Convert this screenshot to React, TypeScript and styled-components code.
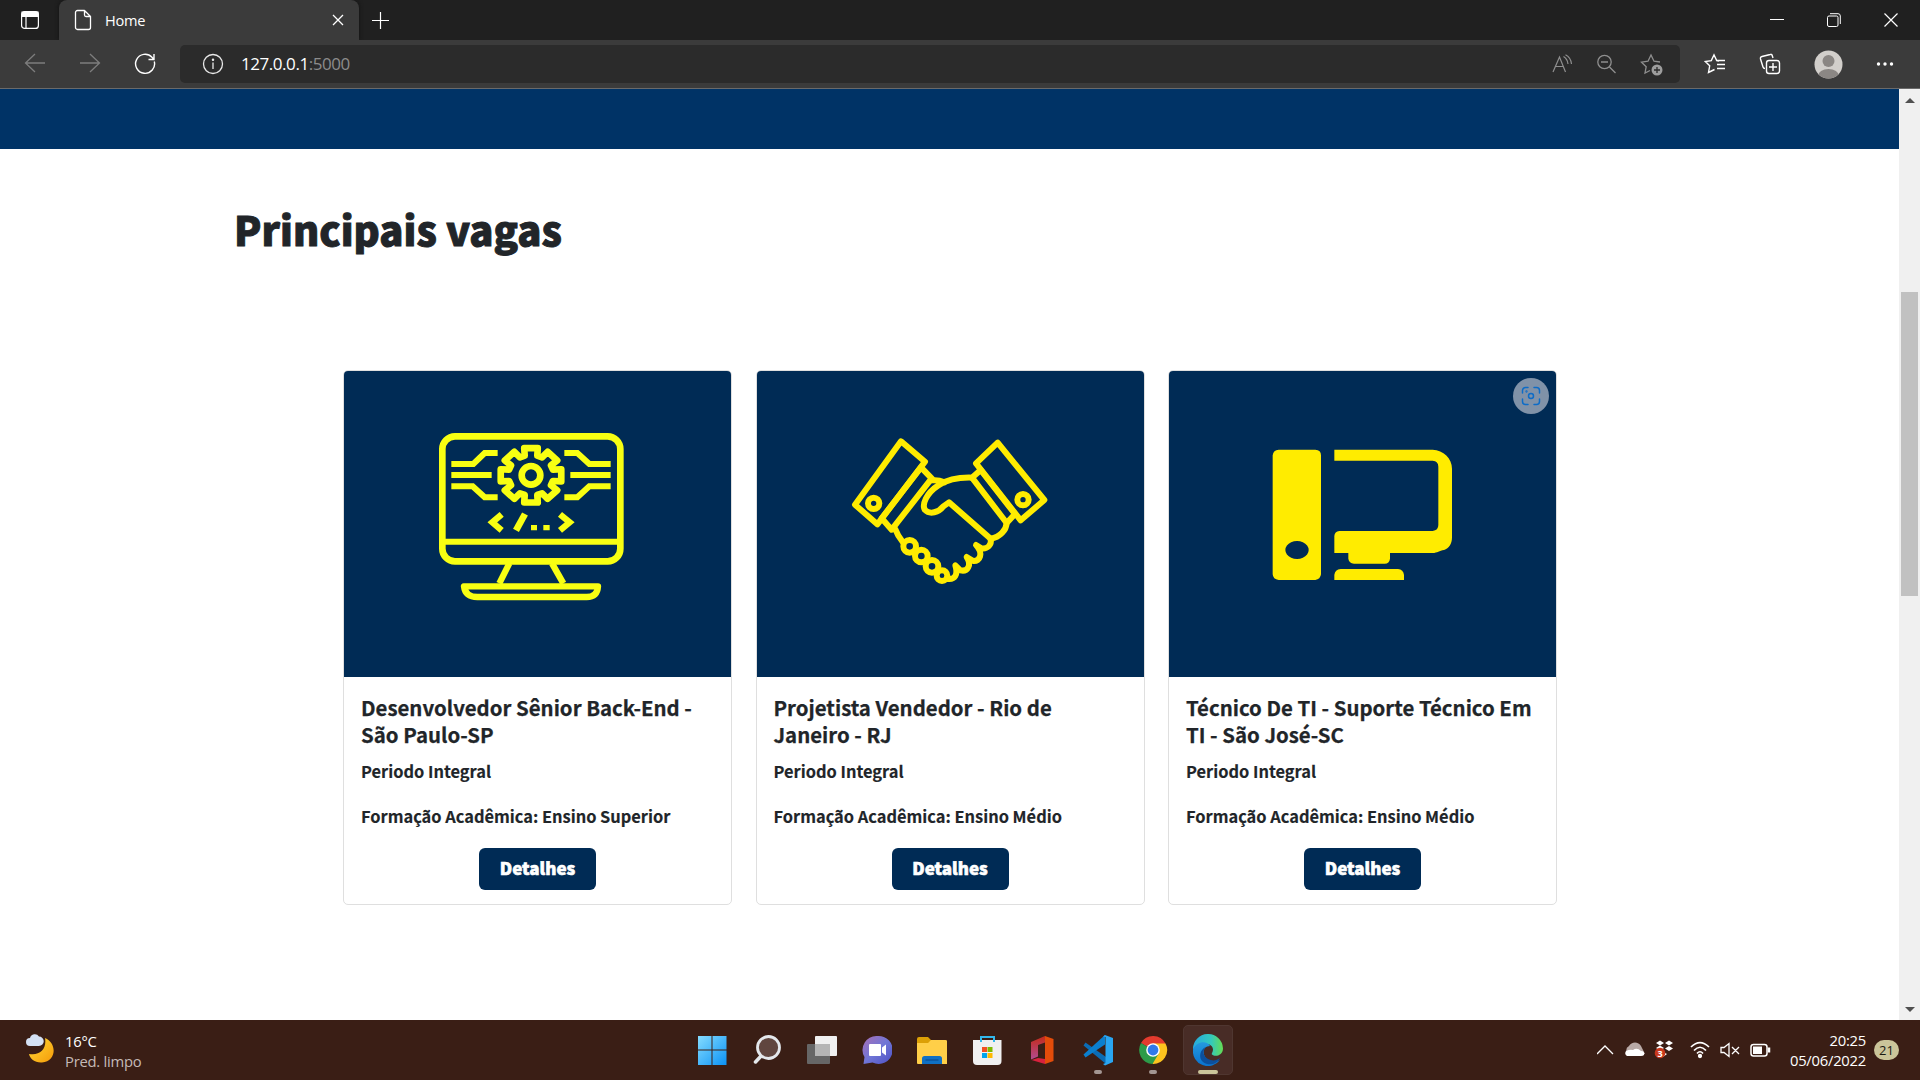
import React from "react";
import styled, { createGlobalStyle } from "styled-components";

const Global = createGlobalStyle`
  * { box-sizing: border-box; }
  html, body { margin: 0; padding: 0; overflow: hidden; }
  body { font-family: "Open Sans", "Noto Sans", sans-serif; }
  h1, h2, p { margin: 0; }
  svg { display: block; flex: none; }
`;

const Screen = styled.div`
  width: 1920px;
  height: 1080px;
  display: flex;
  flex-direction: column;
  background: #fff;
`;

/* ---------- browser ---------- */
const TabStrip = styled.div`
  height: 40px;
  background: #202020;
  display: flex;
  align-items: stretch;
`;
const TabMenu = styled.div`
  width: 59px;
  display: flex;
  align-items: center;
  padding-left: 20px;
`;
const Tab = styled.div`
  width: 300px;
  background: #3b3b3b;
  border-radius: 8px 8px 0 0;
  display: flex;
  align-items: center;
  padding: 0 15px 0 15px;
  color: #fff;
  box-shadow: 0 0 4px #111;
`;
const TabTitle = styled.span`
  flex: 1;
  padding-left: 13px;
  font-size: 14.6px;
  letter-spacing: -0.25px;
  line-height: 20px;
`;
const NewTab = styled.div`
  display: flex;
  align-items: center;
  padding-left: 12px;
  flex: 1;
`;
const WindowButtons = styled.div`
  display: flex;
  align-items: center;
  gap: 43px;
  padding-right: 22px;
`;
const Toolbar = styled.div`
  height: 49px;
  background: #3b3b3b;
  border-bottom: 1px solid #6a6a6a;
  display: flex;
  align-items: center;
  padding: 0 26px 0 24px;
`;
const NavGroup = styled.div`
  display: flex;
  gap: 33px;
  width: 156px;
`;
const AddressBar = styled.div`
  width: 1500px;
  height: 38px;
  border-radius: 5px;
  background: #2b2b2b;
  display: flex;
  align-items: center;
  padding: 0 16px 0 22px;
`;
const Address = styled.span<{ $muted?: boolean }>`
  color: ${(p) => (p.$muted ? "#8c8c8c" : "#fff")};
  font-size: 17px;
  letter-spacing: -0.45px;
  line-height: 24px;
`;
const AddressText = styled.div`
  flex: 1;
  padding-left: 17px;
  display: flex;
`;
const AddressIcons = styled.div`
  display: flex;
  align-items: center;
  gap: 23px;
`;
const ToolIcons = styled.div`
  flex: 1;
  display: flex;
  align-items: center;
  justify-content: space-between;
  padding-left: 24px;
`;

/* ---------- page ---------- */
const Viewport = styled.div`
  height: 931px;
  display: flex;
`;
const Page = styled.main`
  width: 1899px;
  font-family: "Noto Sans CJK JP", "Noto Sans", sans-serif;
  color: #212529;
`;
const Banner = styled.div`
  height: 60px;
  background: #003366;
`;
const Heading = styled.h1`
  padding: 46px 0 0 234px;
  height: 221px;
  font-size: 40px;
  line-height: 68px;
  font-weight: 900;
  -webkit-text-stroke: 0.9px #212529;
  white-space: nowrap;
`;
const Cards = styled.div`
  display: flex;
  gap: 23.5px;
  padding-left: 343px;
`;
const Card = styled.article`
  width: 389px;
  height: 535px;
  border: 1px solid #dfdfdf;
  border-radius: 5px;
  overflow: hidden;
  display: flex;
  flex-direction: column;
`;
const Picture = styled.div<{ $left: number; $top: number }>`
  position: relative;
  height: 306px;
  width: 387px;
  background: #002b55;
  padding: ${(p) => p.$top}px 0 0 ${(p) => p.$left}px;
`;
const VisualSearch = styled.div`
  position: absolute;
  top: 7px;
  right: 7px;
  width: 36px;
  height: 36px;
  border-radius: 50%;
  background: #8092a8;
  display: flex;
  align-items: center;
  justify-content: center;
`;
const Body = styled.div`
  padding: 17px 17px 0;
  display: flex;
  flex-direction: column;
`;
const JobTitle = styled.h2`
  font-size: 20.4px;
  line-height: 27px;
  height: 54px;
  font-weight: 700;
  -webkit-text-stroke: 0.25px #212529;
  white-space: nowrap;
`;
const JobLine = styled.p<{ $gap: number }>`
  margin-top: ${(p) => p.$gap}px;
  font-size: 16.4px;
  line-height: 27px;
  font-weight: 700;
  -webkit-text-stroke: 0.15px #212529;
  white-space: nowrap;
`;
const Details = styled.button`
  align-self: center;
  margin-top: 18px;
  width: 117px;
  height: 42px;
  border: 0;
  padding: 0 0 2px;
  border-radius: 6px;
  background: #002b55;
  color: #fff;
  font: 900 17px/40px "Noto Sans CJK JP", sans-serif;
  -webkit-text-stroke: 0.6px #fff;
`;
const Scrollbar = styled.div`
  width: 21px;
  background: #f0f0f0;
  display: flex;
  flex-direction: column;
  align-items: center;
  padding: 9px 0 8px;
`;
const Arrow = styled.div<{ $down?: boolean }>`
  width: 0;
  height: 0;
  border-left: 5px solid transparent;
  border-right: 5px solid transparent;
  ${(p) => (p.$down ? "border-top: 5px solid #505050; margin-top: auto;" : "border-bottom: 5px solid #505050;")}
`;
const Thumb = styled.div`
  margin-top: 189px;
  width: 17px;
  height: 304px;
  background: #c1c1c1;
`;

/* ---------- taskbar ---------- */
const Taskbar = styled.footer`
  height: 60px;
  background: #3a1e15;
  display: flex;
  color: #fff;
`;
const Weather = styled.div`
  width: 687px;
  display: flex;
  padding: 10px 0 0 25px;
  gap: 11px;
`;
const WeatherText = styled.div<{ $dim?: boolean }>`
  position: relative;
  top: 1px;
  font-size: 14.8px;
  line-height: 20px;
  letter-spacing: -0.25px;
  color: ${(p) => (p.$dim ? "#c5bab7" : "#fff")};
`;
const Apps = styled.div`
  display: flex;
  align-items: center;
  gap: 5.08px;
  flex: 1;
`;
const TaskbarApp = styled.div<{ $active?: boolean }>`
  width: 50px;
  height: 50px;
  border-radius: 5px;
  border: 1px solid ${(p) => (p.$active ? "#4f3630" : "transparent")};
  background: ${(p) => (p.$active ? "#482c26" : "transparent")};
  display: flex;
  flex-direction: column;
  align-items: center;
  padding-top: 8px;
`;
const Running = styled.span<{ $active?: boolean }>`
  margin-top: 4px;
  width: ${(p) => (p.$active ? 20 : 8)}px;
  height: 4px;
  border-radius: 2px;
  background: ${(p) => (p.$active ? "#cbc59a" : "#a39692")};
`;
const Tray = styled.div`
  width: 323px;
  display: flex;
  align-items: center;
`;
const TrayIcons = styled.div`
  display: flex;
  width: 175px;
`;
const Clock = styled.div`
  width: 94px;
  text-align: right;
  font-size: 14.8px;
  line-height: 20px;
  letter-spacing: -0.25px;
`;
const Badge = styled.div`
  margin-left: 8px;
  width: 25px;
  height: 20px;
  border-radius: 10px;
  background: #cbc59a;
  color: #1c1a12;
  font-size: 13px;
  line-height: 20px;
  text-align: center;
`;

const Y1 = "#f8ff12";
const Y2 = "#ffec00";

const gear = (() => {
  const pts: string[] = [];
  for (let i = 0; i < 8; i++) {
    const a = (i * Math.PI) / 4 - Math.PI / 2;
    const at = (r: number, d: number) => `${(333 + r * 1.07 * Math.cos(a + d)).toFixed(1)},${(196 + r * 0.96 * Math.sin(a + d)).toFixed(1)}`;
    pts.push(at(64, -0.28), at(87, -0.22), at(87, 0.22), at(64, 0.28));
  }
  return pts.join(" ");
})();

const DevArt = () => (
  <svg width="220" height="210" viewBox="0 0 660 630" fill="none" stroke={Y1} strokeWidth="18">
    <rect x="67" y="79" width="534" height="375" rx="38" strokeWidth="20" />
    <path d="M68 395H600" />
    <path d="M268 460L238 520M396 460L430 520" strokeWidth="19" />
    <path d="M132 529H534Q532 561 500 561H172Q136 561 132 529Z" strokeWidth="19" strokeLinejoin="round" />
    <path d="M94 162H160L194 129H233M94 195H215M94 229H158L194 262H233" />
    <path d="M572 162H508L472 129H433M572 195H451M572 229H508L472 262H433" />
    <polygon points={gear} strokeLinejoin="round" strokeWidth="20" />
    <circle cx="333" cy="196" r="28" strokeWidth="20" />
    <path d="M245 313L217 337L245 361M420 313L449 337L420 361" strokeWidth="19" />
    <path d="M315 312L288 361" strokeWidth="20" />
    <path d="M333 345H351V361H333ZM370 345H389V361H370Z" fill={Y1} stroke="none" />
  </svg>
);

const HandsArt = () => (
  <svg width="240" height="200" viewBox="0 0 720 600" fill="none" stroke={Y2} strokeWidth="18" strokeLinejoin="round" strokeLinecap="round">
    <path d="M213 94L285 155L142 343L75 284Z" />
    <path d="M503 98L438 160L572 331L643 270Z" />
    <circle cx="131" cy="280" r="17" />
    <circle cx="579" cy="269" r="17" />
    <path d="M273 172L155 325L185 359L305 205L273 172M305 205L185 359" />
    <path d="M452 180L555 312L530 339L426 203L452 180" />
    <path d="M307 211Q325 209 343 217" />
    <path d="M426 203Q365 201 325 226C288 250 275 285 285 300C300 315 326 307 340 289L357 277L482 386C510 382 529 360 530 339" />
    <path d="M196 358Q203 378 219 397" />
    <circle cx="239" cy="409" r="19" />
    <circle cx="274" cy="438" r="19" />
    <circle cx="306" cy="469" r="19" />
    <circle cx="336" cy="497" r="16" />
    <path d="M482 386C486 405 472 418 454 415L438 405C461 430 450 455 430 453L410 441C426 465 413 486 391 481L376 466C385 495 374 509 354 507" />
  </svg>
);

const ComputerArt = () => (
  <svg width="190" height="150" viewBox="60 240 570 450" fill={Y2}>
    <path fillRule="evenodd" d="M86 269H196Q213 270 213 286V643Q211 658 196 660H86Q69 658 68 643V286Q70 270 86 269ZM141 543a35 27 0 1 0 .1 0Z" />
    <path d="M253 269H548C580 270 606 295 606 326V532C606 552 597 565 582 570C568 572 562 579 548 579H420V596Q418 611 404 611H312Q297 609 295 596V579H253V528Q254 514 268 513H548Q565 511 565 495V320Q565 303 548 302H253Z" />
    <path d="M253 660V645Q255 628 272 627H444Q460 629 462 645V660Z" />
  </svg>
);

const jobs = [
  { title: ["Desenvolvedor Sênior Back-End -", "São Paulo-SP"], degree: "Ensino Superior", art: <DevArt />, left: 76, top: 39 },
  { title: ["Projetista Vendedor - Rio de", "Janeiro - RJ"], degree: "Ensino Médio", art: <HandsArt />, left: 73.5, top: 39 },
  { title: ["Técnico De TI - Suporte Técnico Em", "TI - São José-SC"], degree: "Ensino Médio", art: <ComputerArt />, left: 101, top: 69, search: true },
];

const Chrome = () => (
  <>
    <TabStrip>
      <TabMenu>
        <svg width="20" height="20" viewBox="0 0 20 20" fill="none" stroke="#fff" strokeWidth="1.2">
          <rect x="1.6" y="1.6" width="16.8" height="16.8" rx="3" />
          <path d="M2 2h16v4.500H2Z" fill="#fff" />
          <path d="M6 6v12" />
        </svg>
      </TabMenu>
      <Tab>
        <svg width="18" height="22" viewBox="0 0 18 22" fill="none" stroke="#fff" strokeWidth="1.3" strokeLinejoin="round">
          <path d="M3.500 1.500h7L16.500 7.500V18.500a2 2 0 0 1-2 2h-11a2 2 0 0 1-2-2v-15a2 2 0 0 1 2-2ZM10.500 1.500v4.500a1.500 1.500 0 0 0 1.500 1.500h4.500" />
        </svg>
        <TabTitle>Home</TabTitle>
        <svg width="12" height="12" viewBox="0 0 12 12" stroke="#fff" strokeWidth="1.3"><path d="M1 1l10 10M11 1L1 11" /></svg>
      </Tab>
      <NewTab>
        <svg width="19" height="19" viewBox="0 0 19 19" stroke="#fff" strokeWidth="1.2"><path d="M9.500 1v17M1 9.500h17" /></svg>
      </NewTab>
      <WindowButtons>
        <svg width="14" height="14" viewBox="0 0 14 14" stroke="#fff"><path d="M0 6.500h14" /></svg>
        <svg width="14" height="14" viewBox="0 0 14 14" fill="none" stroke="#fff"><rect x=".5" y="3" width="10.500" height="10.500" rx="1.500" /><path d="M3 .7h8a2.300 2.300 0 0 1 2.300 2.300v8" /></svg>
        <svg width="14" height="14" viewBox="0 0 14 14" stroke="#fff" strokeWidth="1.200"><path d="M.5.5l13 13M13.500.5l-13 13" /></svg>
      </WindowButtons>
    </TabStrip>
    <Toolbar>
      <NavGroup>
        <svg width="22" height="20" viewBox="0 0 22 20" fill="none" stroke="#7d7d7d" strokeWidth="1.300"><path d="M21 10H1.500M11 1L1.500 10l9.500 9" /></svg>
        <svg width="22" height="20" viewBox="0 0 22 20" fill="none" stroke="#7d7d7d" strokeWidth="1.300"><path d="M1 10h19.500M11 1l9.500 9-9.500 9" /></svg>
        <svg width="22" height="22" viewBox="0 0 22 22" fill="none" stroke="#fff" strokeWidth="1.400"><path d="M20.300 8.500A9.500 9.500 0 1 1 18 4.300l1.500 1.700M20 1v5.500h-5.500" /></svg>
      </NavGroup>
      <AddressBar>
        <svg width="22" height="22" viewBox="0 0 22 22" fill="none" stroke="#e8e8e8" strokeWidth="1.300"><circle cx="11" cy="11" r="9.500" /><path d="M11 9.500v6.500" /><circle cx="11" cy="6.800" r=".6" fill="#fff" /></svg>
        <AddressText>
          <Address>127.0.0.1</Address>
          <Address $muted>:5000</Address>
        </AddressText>
        <AddressIcons>
          <svg width="22" height="20" viewBox="0 0 22 20" fill="none" stroke="#8f8f8f" strokeWidth="1.200"><path d="M2 18L8.500 3l6 15M4.500 12.500h8M12.500 2.500q4 2.500 4.500 7.500M14.500 .8q5.500 3 6 9.200" /></svg>
          <svg width="21" height="20" viewBox="0 0 21 20" fill="none" stroke="#8f8f8f" strokeWidth="1.300"><circle cx="8.500" cy="8" r="6.700" /><path d="M5 8h7M13.500 13l6 6" /></svg>
          <svg width="24" height="23" viewBox="0 0 24 23" fill="none" stroke="#8f8f8f" strokeWidth="1.300"><path d="M20 9l-6-.8L11 2 8 8.200l-6.500 1 4.700 4.500L5 20l5-2.500" /><circle cx="17" cy="17" r="5.500" fill="#9d9d9d" stroke="none" /><path d="M17 14v6M14 17h6" stroke="#2b2b2b" /></svg>
        </AddressIcons>
      </AddressBar>
      <ToolIcons>
        <svg width="22" height="22" viewBox="0 0 22 22" fill="none" stroke="#fff" strokeWidth="1.400"><path d="M15 8l-2.300-.4L10 1.800 7.300 7.600 1.300 8.500l4.400 4.300-1.200 6.700 6-3M13 7.500h8M13 11.500h8M13 15.500h8" /></svg>
        <svg width="22" height="22" viewBox="0 0 22 22" fill="none" stroke="#fff" strokeWidth="1.400"><rect x="7.500" y="7.500" width="13" height="13" rx="2.500" /><path d="M14 10v8M10 14h8M14 5l-.8-2.500q-.5-1.500-2-1L3 3.500Q1 4 1.500 6L4 14q.5 1.500 2 1.500" /></svg>
        <svg width="29" height="29" viewBox="0 0 29 29"><defs><clipPath id="avatar"><circle cx="14.500" cy="14.500" r="14" /></clipPath></defs><g clipPath="url(#avatar)"><path d="M0 0h29v29H0Z" fill="#d2cfcb" /><circle cx="14.500" cy="11" r="6" fill="#8b8784" /><ellipse cx="14.500" cy="26" rx="10.500" ry="7" fill="#8b8784" /></g></svg>
        <svg width="18" height="6" viewBox="0 0 18 6" fill="#fff"><circle cx="2.500" cy="3" r="1.700" /><circle cx="9" cy="3" r="1.700" /><circle cx="15.500" cy="3" r="1.700" /></svg>
      </ToolIcons>
    </Toolbar>
  </>
);

const StartIcon = () => (
  <svg width="30" height="32" viewBox="0 0 30 32"><defs><linearGradient id="win" x2="1" y2="1"><stop stopColor="#85dcff" /><stop offset="1" stopColor="#0b92f5" /></linearGradient></defs><path fill="url(#win)" d="M1 2H14.500V15.500H1ZM15.500 2H29.500V15.500H15.500ZM1 16.500H14.500V31H1ZM15.500 16.500H29.500V31H15.500Z" /></svg>
);
const SearchIcon = () => (
  <svg width="30" height="32" viewBox="0 0 30 32" fill="none" stroke="#e4e8ec" strokeLinecap="round"><path d="M10 21L3.500 28" strokeWidth="3.500" /><circle cx="16.500" cy="13.500" r="11" strokeWidth="2.800" fill="#60463f" /></svg>
);
const TaskViewIcon = () => (
  <svg width="30" height="32" viewBox="0 0 30 32"><rect x="8" y="2" width="22" height="20" rx="1" fill="#f0f0f0" /><rect x="0" y="10" width="23" height="20" rx="1" fill="#666" /><rect x="8" y="10" width="15" height="12" fill="#b5b5b5" /></svg>
);
const ChatIcon = () => (
  <svg width="30" height="32" viewBox="0 0 30 32"><defs><linearGradient id="chat" x2="1" y2="1"><stop stopColor="#a96fb5" /><stop offset=".5" stopColor="#7076d6" /><stop offset="1" stopColor="#4d50c5" /></linearGradient></defs><path d="M15.500 2a14 14 0 1 1-5 26.500L1.500 30l1-7A14 14 0 0 1 15.500 2Z" fill="url(#chat)" /><rect x="7" y="10" width="12" height="12" rx="1" fill="#fff" /><path d="M20 13.500l4-3v11l-4-3Z" fill="#fff" /></svg>
);
const FolderIcon = () => (
  <svg width="30" height="32" viewBox="0 0 30 32"><path d="M0 5q0-2 2-2h9l3 3h6v6H0Z" fill="#dca006" /><path d="M0 9h11l3-3h14.500q1.500 0 1.500 1v23h-29q-1 0-1-1Z" fill="#ffcf48" /><path d="M5 30v-5.500q0-2.500 2.500-2.500h15q2.500 0 2.500 2.500v5.500Z" fill="#0f70c4" /><path d="M8.500 26h13" stroke="#0a4f97" strokeWidth="1.300" /></svg>
);
const StoreIcon = () => (
  <svg width="30" height="32" viewBox="0 0 30 32"><path d="M1 6H29.500v21q0 4-4 4H5q-4 0-4-4Z" fill="#f0f0f0" /><path d="M9 8V3h13V8" fill="none" stroke="#32b8ec" strokeWidth="2" /><path d="M10 13h5v5h-5Z" fill="#f25022" /><path d="M15.500 13h5v5h-5Z" fill="#7fba00" /><path d="M10 19h5v5h-5Z" fill="#00a4ef" /><path d="M15.500 19h5v5h-5Z" fill="#ffb900" /></svg>
);
const OfficeIcon = () => (
  <svg width="30" height="32" viewBox="0 0 30 32"><defs><linearGradient id="off" y2="1" x2="0"><stop stopColor="#c52a19" /><stop offset="1" stopColor="#b14c91" /></linearGradient></defs><path d="M4 8L18 2V8.500l-7 2.500V22.500l-7 3Z" fill="url(#off)" /><path d="M18 2l8.500 3v22L18 30Z" fill="#e34c0a" /><path d="M4.500 26L11 24l7 1v5Z" fill="#d8213d" /></svg>
);
const CodeIcon = () => (
  <svg width="30" height="32" viewBox="0 0 30 32" fill="none"><path d="M2.500 8.500L23 23v7L.5 11.500Z" fill="#0b6cb5" /><path d="M2.500 23.500L.5 20.500 22 1v9.500Z" fill="#0b7fce" /><path d="M22 1l8 3v24l-8 3.500-2-1.500 2.500-1V3L20 2.500Z" fill="#29a6f2" /></svg>
);
const ChromeIcon = () => (
  <svg width="30" height="32" viewBox="0 0 30 32"><path d="M15 16L3 9A14 14 0 0 1 27.500 9.500Z" fill="#e33b2e" /><path d="M15 9.500H27.500A14 14 0 0 1 14.500 30Z" fill="#fcc31e" /><path d="M15 16L3 9A14 14 0 0 0 14.500 30L21 19Z" fill="#2c9b49" /><circle cx="15" cy="16" r="6.800" fill="#fff" /><circle cx="15" cy="16" r="5.400" fill="#3079ea" /></svg>
);
const EdgeIcon = () => (
  <svg width="30" height="32" viewBox="0 0 30 32"><defs><linearGradient id="eg"><stop stopColor="#26a9df" /><stop offset=".6" stopColor="#33c9bd" /><stop offset="1" stopColor="#65dc52" /></linearGradient><linearGradient id="eb" x2="0" y2="1"><stop stopColor="#2499df" /><stop offset="1" stopColor="#0a72ce" /></linearGradient></defs><path d="M0 15.500A15 15 0 0 1 30 14.500c0 7-8 9-11 6-1-1 1-2 1-5 0-5-7-7-12-5Q3 12 0 15.500Z" fill="url(#eg)" /><path d="M0 15.500C4 6 15 7 17 12c-6 0-8 6-5 11s10 6 15 3A15 15 0 0 1 0 15.500Z" fill="url(#eb)" /><path d="M13 13c-4 4-3 9 2 12 4 2 8 2 12-1-3 7-12 8-17 4S7 15 13 13Z" fill="#0c4f9c" /></svg>
);

export default function App() {
  return (
    <Screen>
      <Global />
      <Chrome />
      <Viewport>
        <Page>
          <Banner />
          <Heading>Principais vagas</Heading>
          <Cards>
            {jobs.map((job) => (
              <Card key={job.title[0]}>
                <Picture $left={job.left} $top={job.top}>
                  {job.art}
                  {job.search && (
                    <VisualSearch>
                      <svg width="20" height="20" viewBox="0 0 20 20" fill="none" stroke="#0d6cc7" strokeWidth="1.500" strokeLinecap="round"><path d="M1.500 7V4.500a3 3 0 0 1 3-3H7M13 1.500h2.500a3 3 0 0 1 3 3V7M18.500 13v2.500a3 3 0 0 1-3 3H13M7 18.500H4.500a3 3 0 0 1-3-3V13" /><circle cx="10" cy="10" r="2.500" /><circle cx="5.500" cy="5.500" r=".4" /></svg>
                    </VisualSearch>
                  )}
                </Picture>
                <Body>
                  <JobTitle>{job.title[0]}<br />{job.title[1]}</JobTitle>
                  <JobLine $gap={10}>Periodo Integral</JobLine>
                  <JobLine $gap={18}>Formação Acadêmica: {job.degree}</JobLine>
                  <Details>Detalhes</Details>
                </Body>
              </Card>
            ))}
          </Cards>
        </Page>
        <Scrollbar>
          <Arrow />
          <Thumb />
          <Arrow $down />
        </Scrollbar>
      </Viewport>
      <Taskbar>
        <Weather>
          <svg width="29" height="36" viewBox="0 0 29 36"><defs><linearGradient id="moon" x2="1" y2="1"><stop stopColor="#ffdc39" /><stop offset="1" stopColor="#f59a08" /></linearGradient></defs><path d="M20 8C32 13 32 31 17 32.500 10 33 5 29 4 24 15 26 22 19 20 8Z" fill="url(#moon)" /><path d="M5 16a4 4 0 0 1 0-8 5 5 0 0 1 9-1.500 4.700 4.700 0 0 1 0 9.500Z" fill="#d4e1f4" /></svg>
          <div>
            <WeatherText>16°C</WeatherText>
            <WeatherText $dim>Pred. limpo</WeatherText>
          </div>
        </Weather>
        <Apps>
          <TaskbarApp><StartIcon /></TaskbarApp>
          <TaskbarApp><SearchIcon /></TaskbarApp>
          <TaskbarApp><TaskViewIcon /></TaskbarApp>
          <TaskbarApp><ChatIcon /></TaskbarApp>
          <TaskbarApp><FolderIcon /></TaskbarApp>
          <TaskbarApp><StoreIcon /></TaskbarApp>
          <TaskbarApp><OfficeIcon /></TaskbarApp>
          <TaskbarApp><CodeIcon /><Running /></TaskbarApp>
          <TaskbarApp><ChromeIcon /><Running /></TaskbarApp>
          <TaskbarApp $active><EdgeIcon /><Running $active /></TaskbarApp>
        </Apps>
        <Tray>
          <TrayIcons>
            <svg width="175" height="24" viewBox="0 0 175 24" fill="none" stroke="#fff" strokeWidth="1.300">
              <path d="M0 16l8-8 8 8" />
              <path d="M32 17a5 5 0 0 1 0-9 7 7 0 0 1 12 0l4 8Z" fill="#b9aaa7" stroke="none" />
              <path d="M30 18q-3-2-1-5 4-2 7-1 4-3 8 1 4 0 3 4-1 1-3 1Z" fill="#fff" stroke="none" />
              <path d="M59 5l4-2.500 4 2.500-4 2.500ZM68 5l4-2.500 4 2.500-4 2.500ZM59 10l4-2.500 4 2.500-4 2.500ZM68 10.500l4-2.500 4 2.500-4 2.500ZM66 14l4 2-4 3Z" fill="#fff" stroke="none" />
              <circle cx="63" cy="15" r="5.300" fill="#c8381c" stroke="none" />
              <text x="63" y="18.500" fill="#fff" stroke="none" fontSize="9" fontWeight="700" textAnchor="middle">3</text>
              <path d="M94 9q9-9 18 0M97 12.500q6-6.500 12 0M100 15.500q3-3.500 6 0" strokeWidth="1.700" />
              <circle cx="103" cy="18" r="1.500" fill="#fff" />
              <path d="M124 9.500h3l5-4v13l-5-4h-3ZM135 9l7 7M142 9l-7 7" />
              <rect x="154" y="6.500" width="16" height="11.500" rx="2.500" strokeWidth="1.500" /><path d="M156 8.500h9v7.500h-9Z" fill="#fff" stroke="none" /><path d="M172 9.500v5" strokeWidth="2.500" />
            </svg>
          </TrayIcons>
          <Clock>20:25<br />05/06/2022</Clock>
          <Badge>21</Badge>
        </Tray>
      </Taskbar>
    </Screen>
  );
}
